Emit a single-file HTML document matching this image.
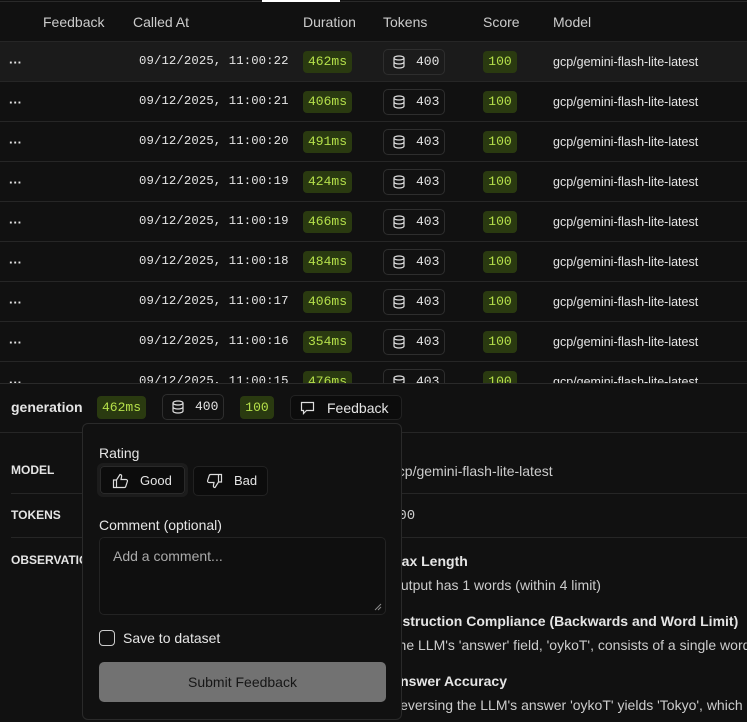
<!DOCTYPE html>
<html><head><style>
*{box-sizing:border-box;margin:0;padding:0}
body{width:747px;height:722px;background:#111;color:#e5e5e5;font-family:"Liberation Sans",sans-serif;font-size:13px;position:relative;overflow:hidden}
.abs{position:absolute}
.mono{font-family:"Liberation Mono",monospace}
.row{position:absolute;left:0;width:747px;height:40px;border-bottom:1px solid #262626}
.dur{position:absolute;left:303px;top:9px;width:49px;height:22px;background:#2a3a10;color:#b5e04a;border-radius:4px;font-size:13px;line-height:22px;text-align:center}
.tok{position:absolute;left:383px;top:7px;width:62px;height:26px;border:1px solid #2e2e2e;border-radius:5px;font-size:13px;line-height:24px}
.sc{position:absolute;left:483px;top:9px;width:34px;height:22px;background:#2a3a10;color:#b5e04a;border-radius:4px;font-size:13px;line-height:22px;text-align:center}
.db{position:absolute;left:8px;top:5px}
</style></head><body>
<div class="abs" style="left:0;top:1px;width:747px;height:1px;background:#2a2a2a"></div>
<div class="abs" style="left:262px;top:0;width:78px;height:2px;background:#fff"></div>
<div class="abs" style="top:14px;left:43px;font-size:14px;color:#ccc">Feedback</div>
<div class="abs" style="top:14px;left:133px;font-size:14px;color:#ccc">Called At</div>
<div class="abs" style="top:14px;left:303px;font-size:14px;color:#ccc">Duration</div>
<div class="abs" style="top:14px;left:383px;font-size:14px;color:#ccc">Tokens</div>
<div class="abs" style="top:14px;left:483px;font-size:14px;color:#ccc">Score</div>
<div class="abs" style="top:14px;left:553px;font-size:14px;color:#ccc">Model</div>
<div class="abs" style="left:0;top:41px;width:747px;height:1px;background:#262626"></div>
<div id="rows"></div>
<script>
var d=[["22","462","400"],["21","406","403"],["20","491","403"],["19","424","403"],["19","466","403"],["18","484","403"],["17","406","403"],["16","354","403"],["15","476","403"]];
var h="";var db='<svg class="db" width="14" height="14" viewBox="0 0 14 14" fill="none" stroke="#ddd" stroke-width="1.2"><ellipse cx="7" cy="3" rx="5" ry="2"/><path d="M2 3v8c0 1.1 2.2 2 5 2s5-.9 5-2V3M2 7c0 1.1 2.2 2 5 2s5-.9 5-2"/></svg>';
d.forEach(function(r,i){h+='<div class="row" style="top:'+(42+40*i)+'px;'+(i==0?'background:#1b1b1b':'')+'"><div class="abs" style="left:9px;top:13px;font-weight:bold;font-size:13px">···</div><div class="abs mono" style="left:139px;top:12px;font-size:12.3px;letter-spacing:0.1px">09/12/2025, 11:00:'+r[0]+'</div><div class="dur mono">'+r[1]+'ms</div><div class="tok mono">'+db+'<span class="abs" style="left:32px">'+r[2]+'</span></div><div class="sc mono">100</div><div class="abs" style="left:553px;top:13px;font-size:12.5px">gcp/gemini-flash-lite-latest</div></div>'});
document.getElementById("rows").innerHTML=h;
</script>
<div class="abs" style="left:0;top:383px;width:747px;height:339px;background:#111;border-top:1px solid #2a2a2a"></div>
<div class="abs" style="left:11px;top:399px;font-size:14px;font-weight:bold">generation</div>
<div class="abs mono" style="left:97px;top:396px;width:49px;height:23px;background:#2a3a10;color:#b5e04a;border-radius:4px;font-size:13px;line-height:23px;text-align:center">462ms</div>
<div class="abs mono" style="left:162px;top:394px;width:62px;height:26px;border:1px solid #2e2e2e;border-radius:5px;font-size:13px;line-height:24px"><svg class="db" width="14" height="14" viewBox="0 0 14 14" fill="none" stroke="#ddd" stroke-width="1.2"><ellipse cx="7" cy="3" rx="5" ry="2"/><path d="M2 3v8c0 1.1 2.2 2 5 2s5-.9 5-2V3M2 7c0 1.1 2.2 2 5 2s5-.9 5-2"/></svg><span class="abs" style="left:32px">400</span></div>
<div class="abs mono" style="left:240px;top:396px;width:34px;height:23px;background:#2a3a10;color:#b5e04a;border-radius:4px;font-size:13px;line-height:23px;text-align:center">100</div>
<div class="abs" style="left:290px;top:395px;width:112px;height:25px;border:1px solid #222;border-radius:5px;background:#0c0c0c">
<svg class="abs" style="left:9px;top:5px" width="15" height="14" viewBox="0 0 15 14" fill="none" stroke="#ddd" stroke-width="1.2"><path d="M1.5 1.5h12v8h-7l-3 3v-3h-2z"/></svg>
<span class="abs" style="left:36px;top:4px;font-size:14px">Feedback</span></div>
<div class="abs" style="left:0;top:432px;width:747px;height:1px;background:#262626"></div>
<div class="abs" style="left:11px;top:463px;font-size:12px;font-weight:bold">MODEL</div>
<div class="abs" style="left:11px;top:493px;width:736px;height:1px;background:#262626"></div>
<div class="abs" style="left:11px;top:508px;font-size:12px;font-weight:bold">TOKENS</div>
<div class="abs" style="left:11px;top:537px;width:736px;height:1px;background:#262626"></div>
<div class="abs" style="left:11px;top:553px;font-size:12px;font-weight:bold">OBSERVATIONS</div>
<div class="abs" style="left:390px;top:463px;font-size:14px;color:#ccc">gcp/gemini-flash-lite-latest</div>
<div class="abs mono" style="left:390px;top:508px;font-size:14px;color:#ccc">400</div>
<div class="abs" style="left:390px;top:553px;font-size:14px;font-weight:bold">Max Length</div>
<div class="abs" style="left:390px;top:577px;font-size:14px;color:#ccc">Output has 1 words (within 4 limit)</div>
<div class="abs" style="left:390px;top:613px;font-size:14px;font-weight:bold;white-space:nowrap">Instruction Compliance (Backwards and Word Limit)</div>
<div class="abs" style="left:390px;top:637px;font-size:14px;color:#ccc;white-space:nowrap">The LLM's 'answer' field, 'oykoT', consists of a single word</div>
<div class="abs" style="left:390px;top:673px;font-size:14px;font-weight:bold">Answer Accuracy</div>
<div class="abs" style="left:390px;top:697px;font-size:14px;color:#ccc;white-space:nowrap">Reversing the LLM's answer 'oykoT' yields 'Tokyo', which</div>
<div class="abs" style="left:82px;top:423px;width:320px;height:297px;background:#111;border:1px solid #2a2a2a;border-radius:6px">
<div class="abs" style="left:16px;top:21px;font-size:14px">Rating</div>
<div class="abs" style="left:14px;top:39px;width:91px;height:34px;border:3px solid #1c1c1c;border-radius:6px"><div style="position:absolute;inset:0;border:1px solid #2a2a2a;border-radius:4px;background:#0c0c0c"></div>
<svg class="abs" style="left:12px;top:7px" width="18" height="16" viewBox="0 0 18 16" fill="none" stroke="#ddd" stroke-width="1.2"><path d="M1.5 7h3v7.5h-3zM4.5 7l3.5-5.5c1.2 0 1.8.8 1.6 2L9 6.5h5c1 0 1.7.9 1.4 1.8l-1.6 5c-.2.7-.8 1.2-1.5 1.2H4.5"/></svg>
<span class="abs" style="left:40px;top:7px;font-size:13px">Good</span></div>
<div class="abs" style="left:110px;top:42px;width:75px;height:30px;border:1px solid #222;border-radius:5px;background:#0c0c0c">
<svg class="abs" style="left:11px;top:6px" width="18" height="16" viewBox="0 0 18 16" fill="none" stroke="#ddd" stroke-width="1.2"><path d="M16.5 9h-3V1.5h3zM13.5 9L10 14.5c-1.2 0-1.8-.8-1.6-2L9 9.5H4c-1 0-1.7-.9-1.4-1.8l1.6-5c.2-.7.8-1.2 1.5-1.2h8.3"/></svg>
<span class="abs" style="left:40px;top:6px;font-size:13px">Bad</span></div>
<div class="abs" style="left:16px;top:93px;font-size:14px">Comment (optional)</div>
<div class="abs" style="left:16px;top:113px;width:287px;height:78px;border:1px solid #232323;border-radius:5px;background:#0f0f0f">
<span class="abs" style="left:13px;top:10px;font-size:14px;color:#aaa">Add a comment...</span>
<svg class="abs" style="right:3px;bottom:3px" width="8" height="8" viewBox="0 0 8 8" stroke="#888"><path d="M1 7L7 1M4 7L7 4"/></svg></div>
<div class="abs" style="left:16px;top:206px;width:16px;height:16px;border:1.3px solid #ccc;border-radius:4px"></div>
<div class="abs" style="left:40px;top:206px;font-size:14px">Save to dataset</div>
<div class="abs" style="left:16px;top:238px;width:287px;height:40px;background:#727272;border-radius:5px;color:#161616;font-size:14px;text-align:center;line-height:40px">Submit Feedback</div>
</div>
</body></html>
